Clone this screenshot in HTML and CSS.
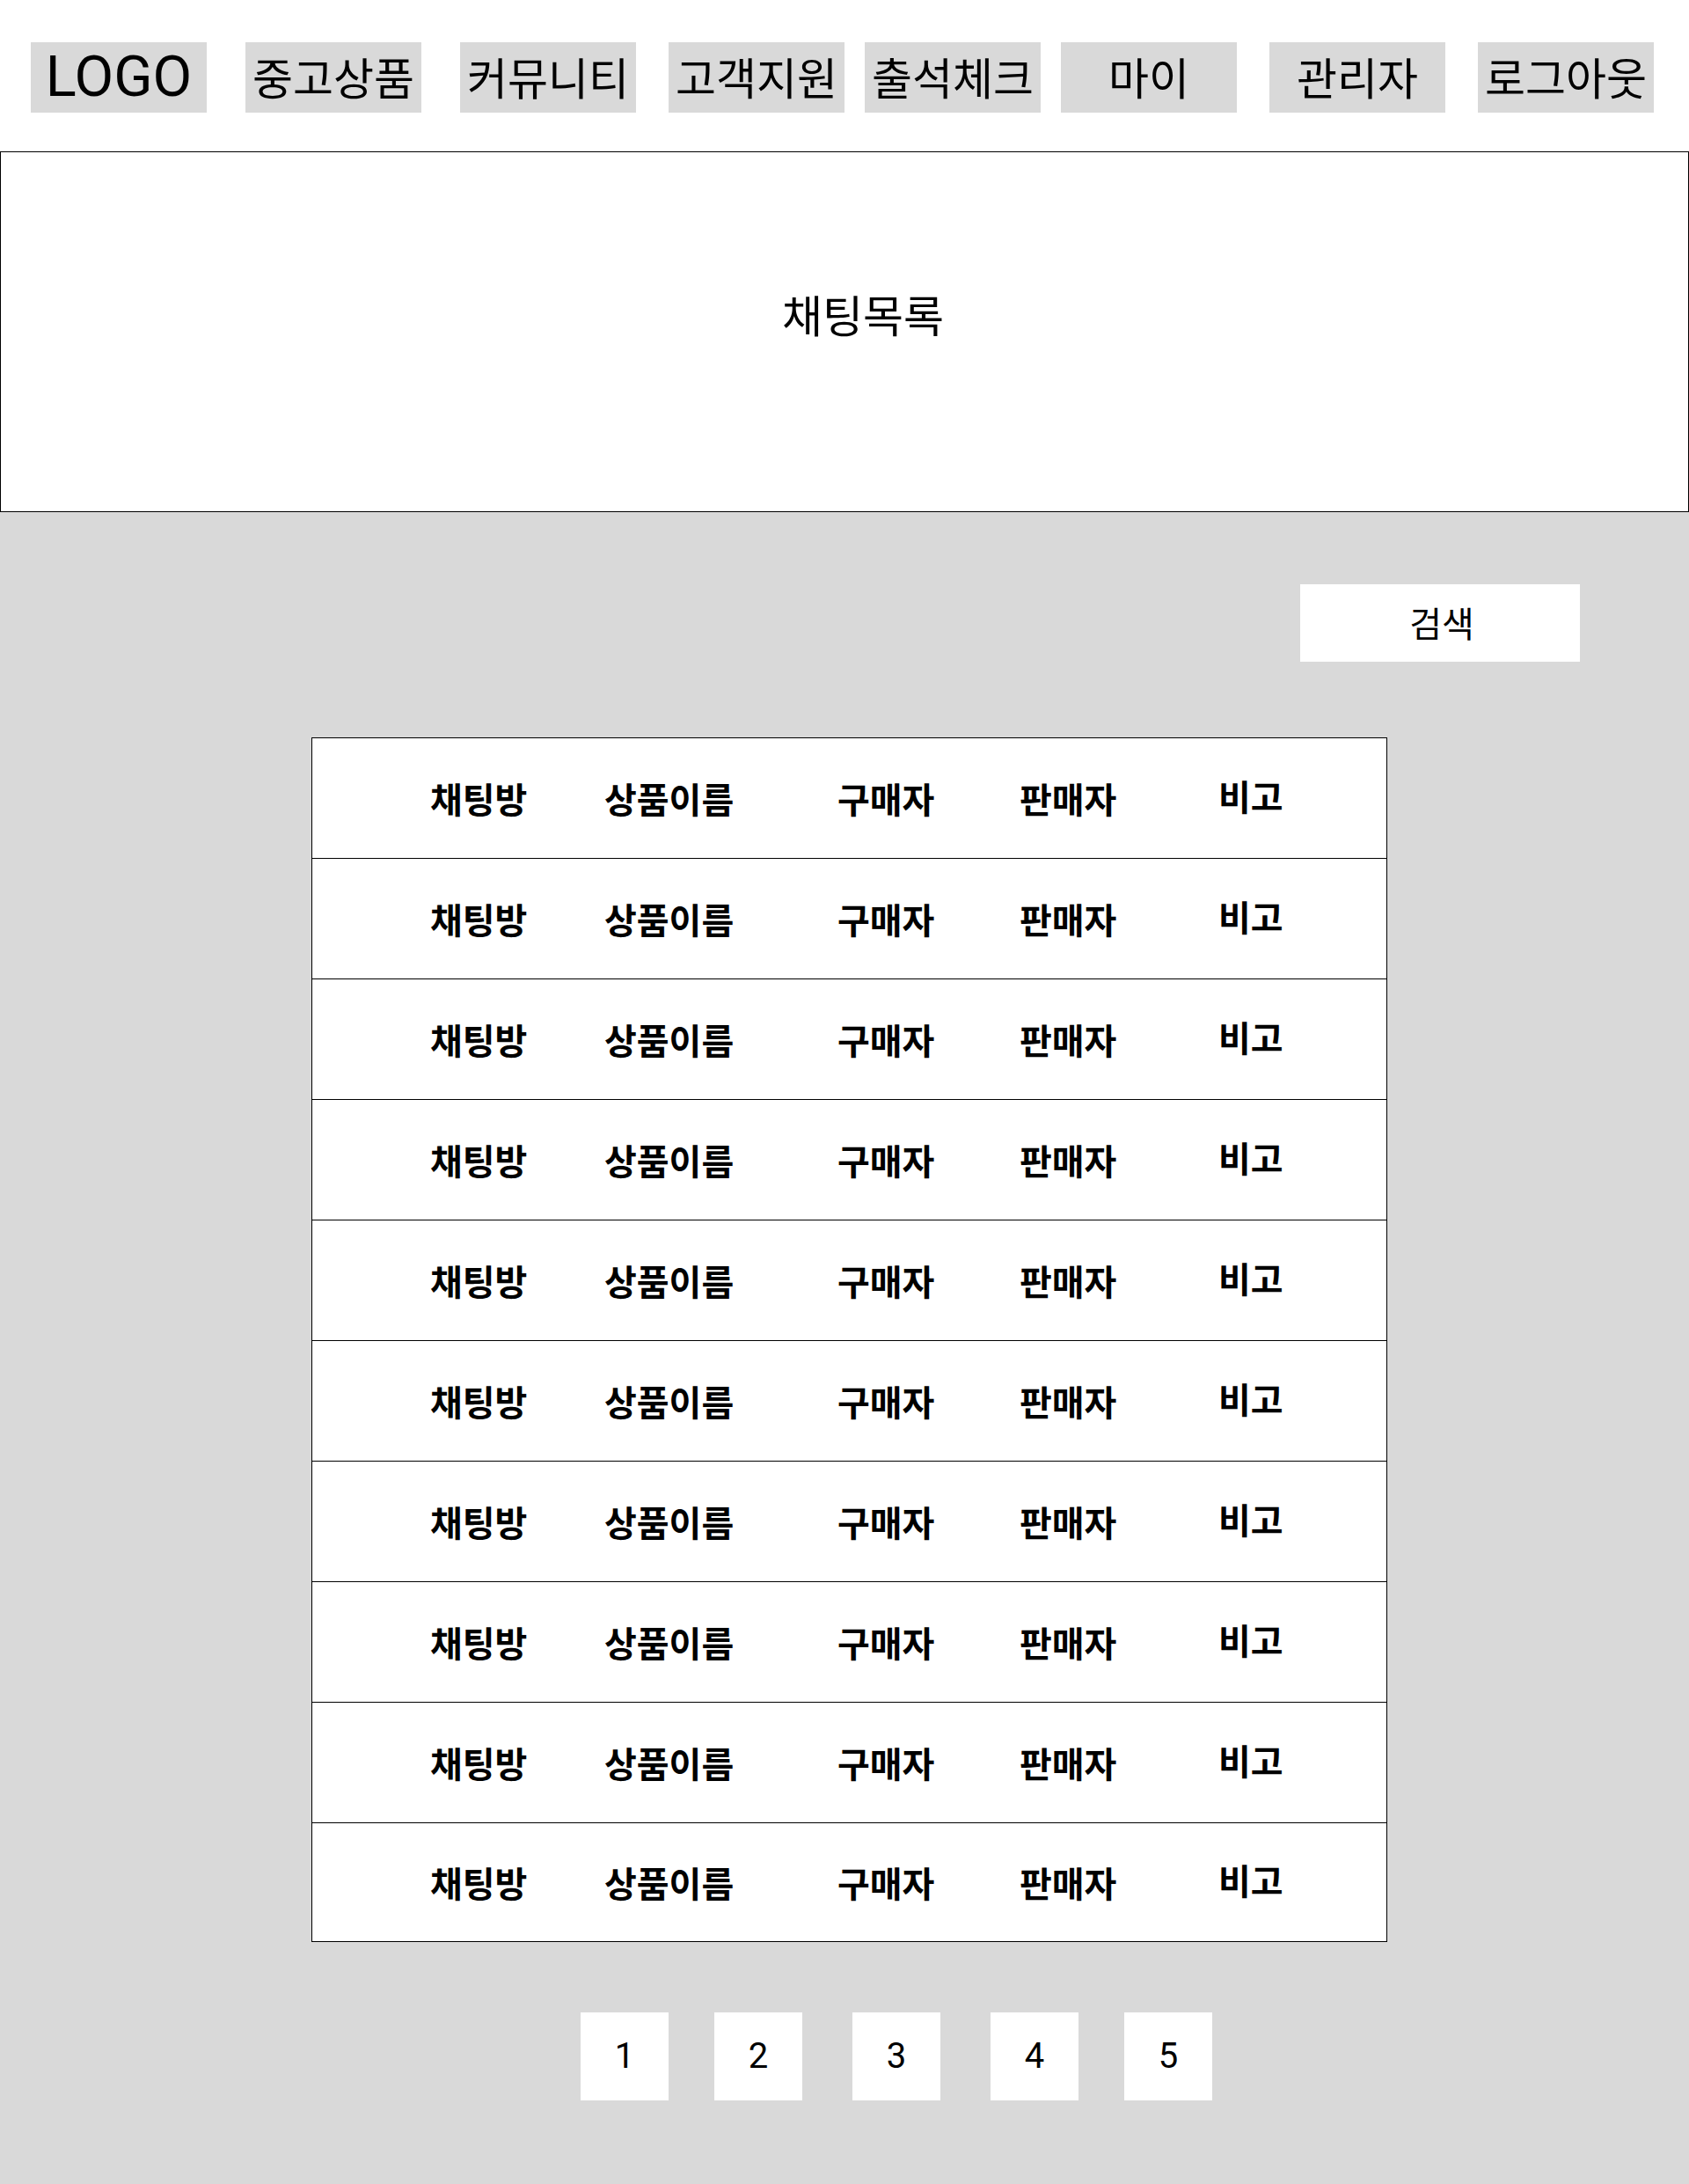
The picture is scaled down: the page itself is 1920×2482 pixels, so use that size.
FILE: index.html
```html
<!DOCTYPE html>
<html lang="ko">
<head>
<meta charset="utf-8">
<title>채팅목록</title>
<link rel="stylesheet" href="styles.css">
</head>
<body>
<header class="nav">
  <a class="nav-item logo n1">LOGO</a>
  <a class="nav-item n2">중고상품</a>
  <a class="nav-item n3">커뮤니티</a>
  <a class="nav-item n4">고객지원</a>
  <a class="nav-item n5">출석체크</a>
  <a class="nav-item n6">마이</a>
  <a class="nav-item n7">관리자</a>
  <a class="nav-item n8">로그아웃</a>
</header>
<section class="hero"><h1 class="hero-title">채팅목록</h1></section>
<main class="main">
  <div class="search-row"><button class="search-btn">검색</button></div>
  <div class="table">
    <div class="row"><span>채팅방</span><span>상품이름</span><span>구매자</span><span>판매자</span><span class="note">비고</span></div>
    <div class="row"><span>채팅방</span><span>상품이름</span><span>구매자</span><span>판매자</span><span class="note">비고</span></div>
    <div class="row"><span>채팅방</span><span>상품이름</span><span>구매자</span><span>판매자</span><span class="note">비고</span></div>
    <div class="row"><span>채팅방</span><span>상품이름</span><span>구매자</span><span>판매자</span><span class="note">비고</span></div>
    <div class="row"><span>채팅방</span><span>상품이름</span><span>구매자</span><span>판매자</span><span class="note">비고</span></div>
    <div class="row"><span>채팅방</span><span>상품이름</span><span>구매자</span><span>판매자</span><span class="note">비고</span></div>
    <div class="row"><span>채팅방</span><span>상품이름</span><span>구매자</span><span>판매자</span><span class="note">비고</span></div>
    <div class="row"><span>채팅방</span><span>상품이름</span><span>구매자</span><span>판매자</span><span class="note">비고</span></div>
    <div class="row"><span>채팅방</span><span>상품이름</span><span>구매자</span><span>판매자</span><span class="note">비고</span></div>
    <div class="row"><span>채팅방</span><span>상품이름</span><span>구매자</span><span>판매자</span><span class="note">비고</span></div>
  </div>
  <nav class="pager">
    <a class="page p1">1</a>
    <a class="page p2">2</a>
    <a class="page p3">3</a>
    <a class="page p4">4</a>
    <a class="page p5">5</a>
  </nav>
</main>
</body>
</html>
```
FILE: styles.css
```css
* { box-sizing: border-box; }
html, body { margin: 0; padding: 0; }
body {
  background: #ffffff;
  color: #000000;
  font-family: "Noto Sans CJK KR", "Noto Sans", sans-serif;
  width: 1920px;
}

.nav {
  display: flex;
  align-items: flex-start;
  height: 172px;
  padding-top: 48px;
}
.nav-item {
  width: 200px;
  height: 80px;
  background: #d9d9d9;
  display: flex;
  align-items: center;
  justify-content: center;
  padding-bottom: 5px;
  font-size: 50px;
  line-height: 1;
  color: #000;
}
.logo {
  font-family: Roboto, "Noto Sans", sans-serif;
  font-size: 65px;
  padding-bottom: 2px;
}
.n1 { margin-left: 35px; }
.n2 { margin-left: 44px; }
.n3 { margin-left: 44px; }
.n4 { margin-left: 37px; }
.n5 { margin-left: 23px; }
.n6 { margin-left: 23px; }
.n7 { margin-left: 37px; }
.n8 { margin-left: 37px; }

.hero {
  height: 410px;
  border: 1px solid #000;
  background: #fff;
  display: flex;
  align-items: center;
  justify-content: center;
  padding-left: 42px;
  padding-bottom: 42px;
}
.hero-title {
  margin: 0;
  font-size: 50px;
  font-weight: 400;
  line-height: 1;
}

.main {
  background: #d9d9d9;
  min-height: 1900px;
  padding-top: 82px;
  padding-bottom: 94px;
}
.search-row {
  display: flex;
  justify-content: flex-end;
  padding-right: 124px;
}
.search-btn {
  width: 318px;
  height: 88px;
  border: none;
  background: #fff;
  font-family: "Noto Sans CJK KR", "Noto Sans", sans-serif;
  font-size: 40px;
  line-height: 1;
  color: #000;
  padding: 0 0 3px 4px;
}

.table {
  margin-top: 86px;
  margin-left: 354px;
  width: 1223px;
  background: #fff;
  border: 1px solid #000;
}
.row {
  display: grid;
  grid-template-columns: 198px 265px 207px 226px 1fr;
  align-items: center;
  padding-left: 134px;
  height: 137px;
  border-bottom: 1px solid #000;
  font-size: 40px;
  font-weight: 700;
  line-height: 1;
}
.row:last-child { border-bottom: none; height: 134px; }
.row .note { position: relative; top: -3px; }

.pager {
  display: flex;
  margin-top: 80px;
}
.page {
  width: 100px;
  height: 100px;
  background: #fff;
  display: flex;
  align-items: center;
  justify-content: center;
  font-family: Roboto, "Noto Sans", sans-serif;
  font-size: 40px;
  line-height: 1;
  color: #000;
}
.p1 { margin-left: 660px; }
.p2 { margin-left: 52px; }
.p3 { margin-left: 57px; }
.p4 { margin-left: 57px; }
.p5 { margin-left: 52px; }
```
